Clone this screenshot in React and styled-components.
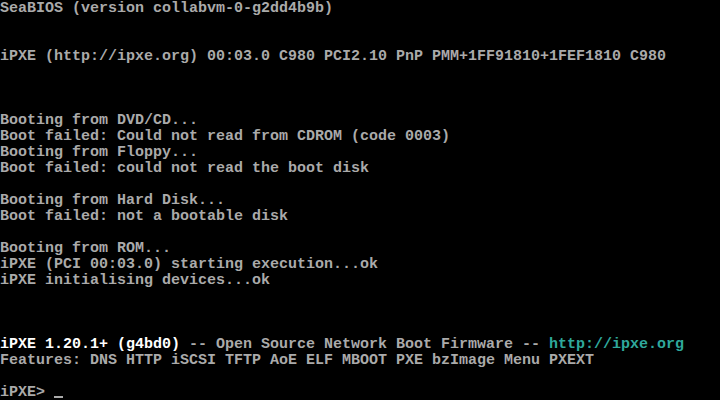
import React from "react";
import styled, { createGlobalStyle } from "styled-components";

const GlobalStyle = createGlobalStyle`
  html, body {
    margin: 0;
    padding: 0;
    background: #000;
  }
`;

const Screen = styled.div`
  width: 720px;
  height: 400px;
  background: #000;
  overflow: hidden;
  font-family: "Liberation Mono", "DejaVu Sans Mono", monospace;
  font-size: 15px;
  font-weight: bold;
  color: #aaaaaa;
`;

const Line = styled.div`
  height: 16px;
  line-height: 17px;
  white-space: pre;
  position: relative;
`;

const Seg = styled.span`
  color: ${({ tone }) =>
    tone === "bright" ? "#ffffff" : tone === "cyan" ? "#2fa89c" : "#aaaaaa"};
`;

const Cursor = styled.span`
  position: absolute;
  left: 54px;
  top: 12px;
  width: 9px;
  height: 2px;
  background: #aaaaaa;
`;

const lines = [
  "SeaBIOS (version collabvm-0-g2dd4b9b)",
  "",
  "",
  "iPXE (http://ipxe.org) 00:03.0 C980 PCI2.10 PnP PMM+1FF91810+1FEF1810 C980",
  "",
  "",
  "",
  "Booting from DVD/CD...",
  "Boot failed: Could not read from CDROM (code 0003)",
  "Booting from Floppy...",
  "Boot failed: could not read the boot disk",
  "",
  "Booting from Hard Disk...",
  "Boot failed: not a bootable disk",
  "",
  "Booting from ROM...",
  "iPXE (PCI 00:03.0) starting execution...ok",
  "iPXE initialising devices...ok",
  "",
  "",
  "",
  [
    { text: "iPXE 1.20.1+ (g4bd0)", tone: "bright" },
    { text: " -- Open Source Network Boot Firmware -- " },
    { text: "http://ipxe.org", tone: "cyan" },
  ],
  "Features: DNS HTTP iSCSI TFTP AoE ELF MBOOT PXE bzImage Menu PXEXT",
  "",
];

export default function App() {
  return (
    <>
      <GlobalStyle />
      <Screen>
        {lines.map((line, i) => (
          <Line key={i}>
            {Array.isArray(line)
              ? line.map((s, j) => (
                  <Seg key={j} tone={s.tone}>
                    {s.text}
                  </Seg>
                ))
              : line}
          </Line>
        ))}
        <Line>
          iPXE&gt;
          <Cursor />
        </Line>
      </Screen>
    </>
  );
}
